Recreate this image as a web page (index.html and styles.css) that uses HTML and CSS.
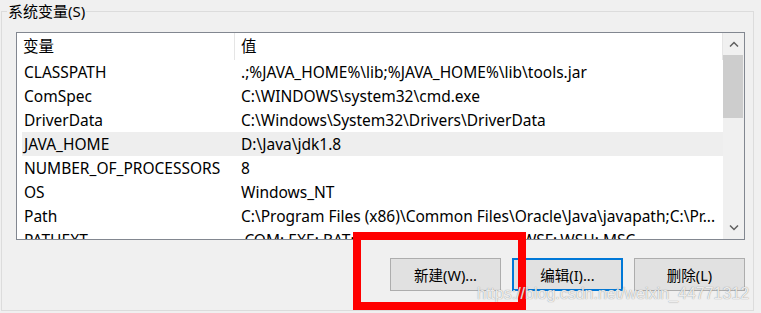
FILE: index.html
```html
<!DOCTYPE html>
<html>
<head>
    <title>系统变量</title>
    <link rel="stylesheet" href="styles.css">
</head>
<body>
    <div class="group">
        <span class="group-title">系统变量(S)</span>

        <div class="listbox">
            <div class="list-main">
                <div class="list-head">
                    <div class="head-cell head-name">变量</div>
                    <div class="head-cell head-value">值</div>
                </div>
                <div class="list-rows">
                    <div class="row"><span class="c-name">CLASSPATH</span><span class="c-value">.;%JAVA_HOME%\lib;%JAVA_HOME%\lib\tools.jar</span></div>
                    <div class="row"><span class="c-name">ComSpec</span><span class="c-value">C:\WINDOWS\system32\cmd.exe</span></div>
                    <div class="row"><span class="c-name">DriverData</span><span class="c-value">C:\Windows\System32\Drivers\DriverData</span></div>
                    <div class="row selected"><span class="c-name">JAVA_HOME</span><span class="c-value">D:\Java\jdk1.8</span></div>
                    <div class="row"><span class="c-name">NUMBER_OF_PROCESSORS</span><span class="c-value">8</span></div>
                    <div class="row"><span class="c-name">OS</span><span class="c-value">Windows_NT</span></div>
                    <div class="row"><span class="c-name">Path</span><span class="c-value">C:\Program Files (x86)\Common Files\Oracle\Java\javapath;C:\Pr...</span></div>
                    <div class="row"><span class="c-name">PATHEXT</span><span class="c-value">.COM;.EXE;.BAT;.CMD;.VBS;.VBE;.JS;.JSE;.WSF;.WSH;.MSC</span></div>
                </div>
            </div>

            <!-- scrollbar -->
            <div class="scrollbar">
                <div class="arrow">
                    <svg width="10" height="6" viewBox="0 0 10 6"><path d="M1 5.5 L5 1.5 L9 5.5" fill="none" stroke="#606060" stroke-width="1.5"/></svg>
                </div>
                <div class="thumb"></div>
                <div class="track"></div>
                <div class="arrow">
                    <svg width="10" height="6" viewBox="0 0 10 6"><path d="M1 0.5 L5 4.5 L9 0.5" fill="none" stroke="#606060" stroke-width="1.5"/></svg>
                </div>
            </div>
        </div>

        <div class="buttons">
            <button type="button" class="btn">新建(W)...</button>
            <button type="button" class="btn btn-focus">编辑(I)...</button>
            <button type="button" class="btn">删除(L)</button>
        </div>
    </div>

    <!-- tanda merah dan watermark -->
    <div class="mark"></div>
    <div class="watermark">https://blog.csdn.net/weixin_44771312</div>
</body>
</html>
```

FILE: styles.css
```css
/* halaman */
body {
    margin: 0;
    width: 761px;
    height: 313px;
    overflow: hidden;
    position: relative;
    background-color: #f0f0f0;
    font-family: "Noto Sans", "Noto Sans CJK SC", sans-serif;
    color: #000;
}

/* groupbox */
.group {
    box-sizing: border-box;
    height: 300px;
    margin: 11px 7px 2px 1px;
    border: 1px solid #dcdcdc;
}

.group-title {
    display: block;
    width: fit-content;
    margin: -11px 0 0 5px;
    padding: 0 1px;
    background-color: #f0f0f0;
    font-size: 15px;
    line-height: 20px;
}

/* listbox */
.listbox {
    box-sizing: border-box;
    width: 729px;
    height: 208px;
    margin: 11px 0 0 14px;
    border: 1px solid #828790;
    background-color: #fff;
    display: flex;
}

.list-main {
    flex: 1;
    min-width: 0;
    overflow: hidden;
}

.list-head {
    display: flex;
    height: 27px;
    font-size: 15.5px;
    line-height: 27px;
}

.head-cell {
    box-sizing: border-box;
    border-right: 1px solid #e5e5e5;
}

.head-name {
    width: 218px;
    padding-left: 6px;
}

.head-value {
    flex: 1;
    padding-left: 6px;
}

.list-rows {
    padding-left: 5px;
}

.row {
    display: grid;
    grid-template-columns: 214px 1fr;
    height: 24px;
    font-size: 15.5px;
    line-height: 24px;
    white-space: nowrap;
}

.row.selected {
    background-color: #eeeeee;
}

.c-name {
    padding-left: 2px;
    overflow: hidden;
}

.c-value {
    padding-left: 5px;
    overflow: hidden;
}

/* scrollbar */
.scrollbar {
    width: 21px;
    display: flex;
    flex-direction: column;
    background-color: #f0f0f0;
}

.arrow {
    height: 22px;
    display: flex;
    align-items: center;
    justify-content: center;
}

.thumb {
    height: 63px;
    margin: 0 1px 0 0;
    background-color: #cdcdcd;
}

.track {
    flex: 1;
}

/* tombol */
.buttons {
    display: flex;
    justify-content: flex-end;
    gap: 11px;
    margin-top: 18px;
    padding-right: 8px;
}

.btn {
    box-sizing: border-box;
    width: 111px;
    height: 33px;
    padding: 0;
    border: 1px solid #adadad;
    background-color: #e1e1e1;
    font-family: "Noto Sans", "Noto Sans CJK SC", sans-serif;
    font-size: 14.5px;
    color: #000;
}

.btn-focus {
    border: 2px solid #0078d7;
}

/* overlay */
.mark {
    position: absolute;
    left: 353px;
    top: 232px;
    width: 173px;
    height: 78px;
    box-sizing: border-box;
    border: 8px solid #ff0000;
}

.watermark {
    position: absolute;
    left: 477px;
    top: 284px;
    font-family: "Liberation Sans", Arial, sans-serif;
    font-size: 16px;
    line-height: 20px;
    color: rgba(255, 255, 255, 0.85);
    text-shadow: 0 0 1px rgba(110, 110, 110, 0.9);
}
```
